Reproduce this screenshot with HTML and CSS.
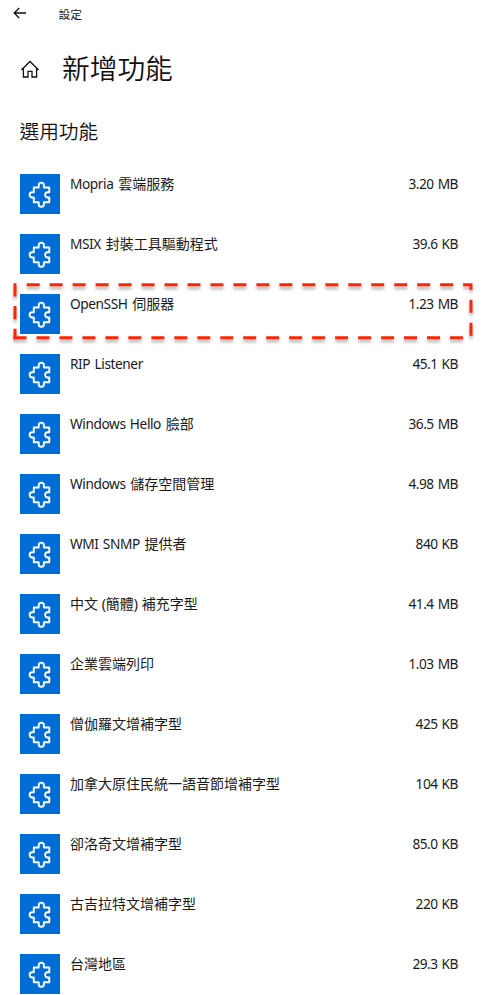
FILE: index.html
```html
<!DOCTYPE html>
<html lang="zh-Hant">
<head>
<meta charset="utf-8">
<title>設定</title>
<link rel="stylesheet" href="styles.css">
</head>
<body>
<svg class="defs" width="0" height="0" aria-hidden="true">
  <symbol id="puzzle" viewBox="0 0 40 40">
    <path d="M13.8 13.5H18.7V11.2A2.6 2.6 0 0 1 23.9 11.2V13.5H29.3V18.3H27.7A2.6 2.6 0 0 0 27.7 23.5H29.3V28.2H23.9V30.2A2.6 2.6 0 0 1 18.7 30.2V28.2H13.8V23.5H12.2A2.6 2.6 0 0 1 12.2 18.3H13.8Z" fill="none" stroke="#fff" stroke-width="1.9" stroke-linejoin="round"/>
  </symbol>
</svg>
<header class="titlebar">
  <svg class="back" viewBox="0 0 14 12" aria-hidden="true"><path d="M13 6H1.2M6.2 1L1.2 6L6.2 11"/></svg>
  <span class="app-name">設定</span>
</header>
<div class="page-title">
  <svg class="home" viewBox="0 0 20 20" aria-hidden="true"><path d="M1.4 11L10 2.5L18.6 11M3.4 9.3V18H8V12.4H12V18H16.6V9.3"/></svg>
  <h1>新增功能</h1>
</div>
<h2>選用功能</h2>
<ul class="features">
  <li><svg class="tile"><use href="#puzzle"/></svg><span class="name"><span class="latin">Mopria</span> 雲端服務</span><span class="size">3.20 MB</span></li>
  <li><svg class="tile"><use href="#puzzle"/></svg><span class="name"><span class="latin">MSIX</span> 封裝工具驅動程式</span><span class="size">39.6 KB</span></li>
  <li class="marked"><svg class="tile"><use href="#puzzle"/></svg><span class="name"><span class="latin">OpenSSH</span> 伺服器</span><span class="size">1.23 MB</span>
    <svg class="marker" viewBox="0 0 470 66" aria-hidden="true">
      <path d="M26.7 10.7H471V63.7H13.5" stroke-dasharray="13 9.97"/>
      <path d="M15 9.2V65.2" stroke-dasharray="13.3 9.5"/>
    </svg></li>
  <li><svg class="tile"><use href="#puzzle"/></svg><span class="name"><span class="latin">RIP Listener</span></span><span class="size">45.1 KB</span></li>
  <li><svg class="tile"><use href="#puzzle"/></svg><span class="name"><span class="latin">Windows Hello</span> 臉部</span><span class="size">36.5 MB</span></li>
  <li><svg class="tile"><use href="#puzzle"/></svg><span class="name"><span class="latin">Windows</span> 儲存空間管理</span><span class="size">4.98 MB</span></li>
  <li><svg class="tile"><use href="#puzzle"/></svg><span class="name"><span class="latin">WMI SNMP</span> 提供者</span><span class="size">840 KB</span></li>
  <li><svg class="tile"><use href="#puzzle"/></svg><span class="name">中文 (簡體) 補充字型</span><span class="size">41.4 MB</span></li>
  <li><svg class="tile"><use href="#puzzle"/></svg><span class="name">企業雲端列印</span><span class="size">1.03 MB</span></li>
  <li><svg class="tile"><use href="#puzzle"/></svg><span class="name">僧伽羅文增補字型</span><span class="size">425 KB</span></li>
  <li><svg class="tile"><use href="#puzzle"/></svg><span class="name">加拿大原住民統一語音節增補字型</span><span class="size">104 KB</span></li>
  <li><svg class="tile"><use href="#puzzle"/></svg><span class="name">卻洛奇文增補字型</span><span class="size">85.0 KB</span></li>
  <li><svg class="tile"><use href="#puzzle"/></svg><span class="name">古吉拉特文增補字型</span><span class="size">220 KB</span></li>
  <li><svg class="tile"><use href="#puzzle"/></svg><span class="name">台灣地區</span><span class="size">29.3 KB</span></li>
</ul>
</body>
</html>
```
FILE: styles.css
```css
* { box-sizing: border-box; }
html { overflow: hidden; }
body {
  margin: 0;
  height: 995px;
  overflow: hidden;
  background: #fff;
  color: #1a1a1a;
  font-family: "Noto Sans", "Noto Sans CJK TC", sans-serif;
  font-size: 14px;
}
.defs { display: block; }
.titlebar {
  display: flex;
  align-items: center;
  gap: 31.5px;
  height: 28px;
  padding-left: 13px;
}
.back { width: 14px; height: 12px; margin-top: -3px; }
.back path, .home path { fill: none; stroke: #111; stroke-width: 1.3; }
.app-name { font-size: 11.7px; line-height: 16px; }
.page-title {
  display: flex;
  align-items: center;
  gap: 22px;
  height: 40px;
  margin-top: 21px;
  padding-left: 20px;
}
.home { width: 20px; height: 20px; }
h1, h2 { margin: 0; font-weight: 350; color: #111; }
h1 { font-size: 27.7px; line-height: 40px; margin-top: -2px; }
h2 { font-size: 19.7px; line-height: 28px; margin-top: 29px; padding-left: 19.5px; }
.features { list-style: none; margin: 28px 0 0; padding: 0 37px 0 20px; }
.features li {
  position: relative;
  display: flex;
  align-items: flex-start;
  height: 60px;
  line-height: 20px;
  white-space: nowrap;
}
.tile { flex: none; width: 40px; height: 40px; background: #006dd5; }
.name { flex: 1; margin-left: 10px; }
.latin { font-size: 13.7px; letter-spacing: -0.42px; word-spacing: 1.2px; margin-right: 1.2px; }
.size { font-size: 13.7px; letter-spacing: -0.5px; word-spacing: 1px; }
.marker {
  position: absolute;
  left: -20px;
  top: -20px;
  width: 470px;
  height: 66px;
  overflow: visible;
  filter: drop-shadow(0 3px 1.5px rgba(0, 0, 0, .3));
}
.marker path { fill: none; stroke: #ff2600; stroke-width: 3; }
```
